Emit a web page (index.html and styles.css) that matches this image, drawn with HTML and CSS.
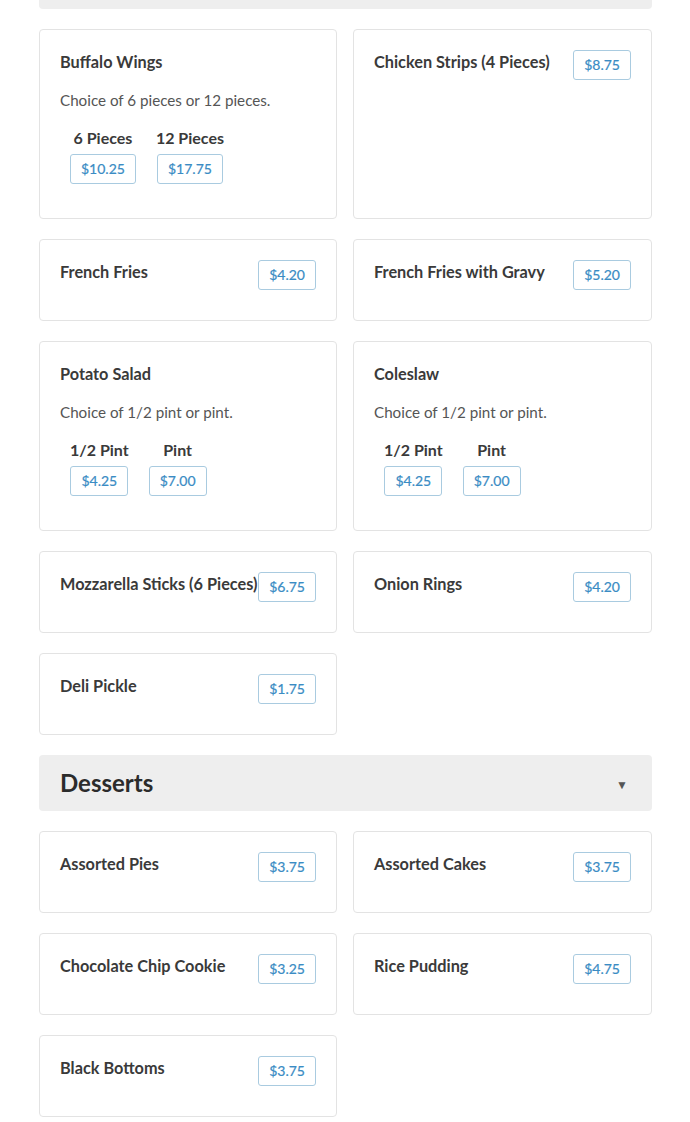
FILE: index.html
```html
<!DOCTYPE html>
<html lang="en">
<head>
<meta charset="utf-8">
<title>Menu</title>
<link rel="stylesheet" href="styles.css">
</head>
<body>
<div class="menu">
  <div class="section-head section-head--cut">
    <h2 class="section-title">Sides</h2>
    <span class="caret">▼</span>
  </div>
  <div class="grid">
    <div class="card">
      <h3 class="item-title">Buffalo Wings</h3>
      <p class="item-desc">Choice of 6 pieces or 12 pieces.</p>
      <div class="options">
        <div class="option"><span class="option-label">6 Pieces</span><span class="price">$10.25</span></div>
        <div class="option"><span class="option-label">12 Pieces</span><span class="price">$17.75</span></div>
      </div>
    </div>
    <div class="card">
      <div class="item-row"><h3 class="item-title">Chicken Strips (4 Pieces)</h3><span class="price">$8.75</span></div>
    </div>
    <div class="card">
      <div class="item-row"><h3 class="item-title">French Fries</h3><span class="price">$4.20</span></div>
    </div>
    <div class="card">
      <div class="item-row"><h3 class="item-title">French Fries with Gravy</h3><span class="price">$5.20</span></div>
    </div>
    <div class="card">
      <h3 class="item-title">Potato Salad</h3>
      <p class="item-desc">Choice of 1/2 pint or pint.</p>
      <div class="options">
        <div class="option"><span class="option-label">1/2 Pint</span><span class="price">$4.25</span></div>
        <div class="option"><span class="option-label">Pint</span><span class="price">$7.00</span></div>
      </div>
    </div>
    <div class="card">
      <h3 class="item-title">Coleslaw</h3>
      <p class="item-desc">Choice of 1/2 pint or pint.</p>
      <div class="options">
        <div class="option"><span class="option-label">1/2 Pint</span><span class="price">$4.25</span></div>
        <div class="option"><span class="option-label">Pint</span><span class="price">$7.00</span></div>
      </div>
    </div>
    <div class="card">
      <div class="item-row"><h3 class="item-title">Mozzarella Sticks (6 Pieces)</h3><span class="price">$6.75</span></div>
    </div>
    <div class="card">
      <div class="item-row"><h3 class="item-title">Onion Rings</h3><span class="price">$4.20</span></div>
    </div>
    <div class="card">
      <div class="item-row"><h3 class="item-title">Deli Pickle</h3><span class="price">$1.75</span></div>
    </div>
  </div>

  <div class="section-head">
    <h2 class="section-title">Desserts</h2>
    <span class="caret">▼</span>
  </div>
  <div class="grid">
    <div class="card">
      <div class="item-row"><h3 class="item-title">Assorted Pies</h3><span class="price">$3.75</span></div>
    </div>
    <div class="card">
      <div class="item-row"><h3 class="item-title">Assorted Cakes</h3><span class="price">$3.75</span></div>
    </div>
    <div class="card">
      <div class="item-row"><h3 class="item-title">Chocolate Chip Cookie</h3><span class="price">$3.25</span></div>
    </div>
    <div class="card">
      <div class="item-row"><h3 class="item-title">Rice Pudding</h3><span class="price">$4.75</span></div>
    </div>
    <div class="card">
      <div class="item-row"><h3 class="item-title">Black Bottoms</h3><span class="price">$3.75</span></div>
    </div>
  </div>
</div>
</body>
</html>
```

FILE: styles.css
```css
* { box-sizing: border-box; }

html, body {
  margin: 0;
  padding: 0;
  background: #ffffff;
}

body {
  font-family: Lato, "Open Sans", "Liberation Sans", sans-serif;
  color: #333333;
  font-size: 16px;
  line-height: 24px;
}

.menu {
  margin: 0 38px 0 39px;
  display: flex;
  flex-direction: column;
  gap: 20px;
}

.section-head {
  height: 56px;
  background: #eeeeee;
  border-radius: 4px;
  display: flex;
  align-items: center;
  justify-content: space-between;
  padding: 0 24px 0 21px;
}

.section-head--cut {
  margin-top: -47px;
}

.section-title {
  margin: 0;
  font-size: 24px;
  font-weight: 700;
  color: #2b2b2b;
  line-height: 30px;
}

.caret {
  font-size: 12px;
  color: #555555;
  line-height: 1;
  padding-top: 3px;
}

.grid {
  display: grid;
  grid-template-columns: 298px 1fr;
  column-gap: 16px;
  row-gap: 20px;
}

.card {
  border: 1px solid #e3e3e3;
  border-radius: 4px;
  padding: 20px 20px 30px;
  background: #ffffff;
}

.item-row {
  display: flex;
  justify-content: space-between;
  align-items: flex-start;
}

.item-title {
  margin: 0;
  font-size: 16.3px;
  font-weight: 700;
  line-height: 24px;
  color: #3a3a3a;
  white-space: nowrap;
}

.item-desc {
  margin: 14px 0 0;
  font-size: 15.2px;
  line-height: 24px;
  color: #555555;
}

.options {
  display: flex;
  margin-top: 14px;
  padding-bottom: 4px;
}

.option {
  display: flex;
  flex-direction: column;
  align-items: center;
  gap: 4px;
  margin: 0 10px;
}

.option-label {
  font-weight: 700;
  font-size: 16px;
  line-height: 24px;
  color: #3a3a3a;
}

.price {
  display: inline-block;
  height: 30px;
  line-height: 28px;
  padding: 0 10px;
  border: 1px solid #a9cbe0;
  border-radius: 3px;
  font-size: 14px;
  font-weight: 400;
  color: #3a8cc4;
  white-space: nowrap;
  flex-shrink: 0;
  -webkit-text-stroke: 0.2px #3a8cc4;
}
```
